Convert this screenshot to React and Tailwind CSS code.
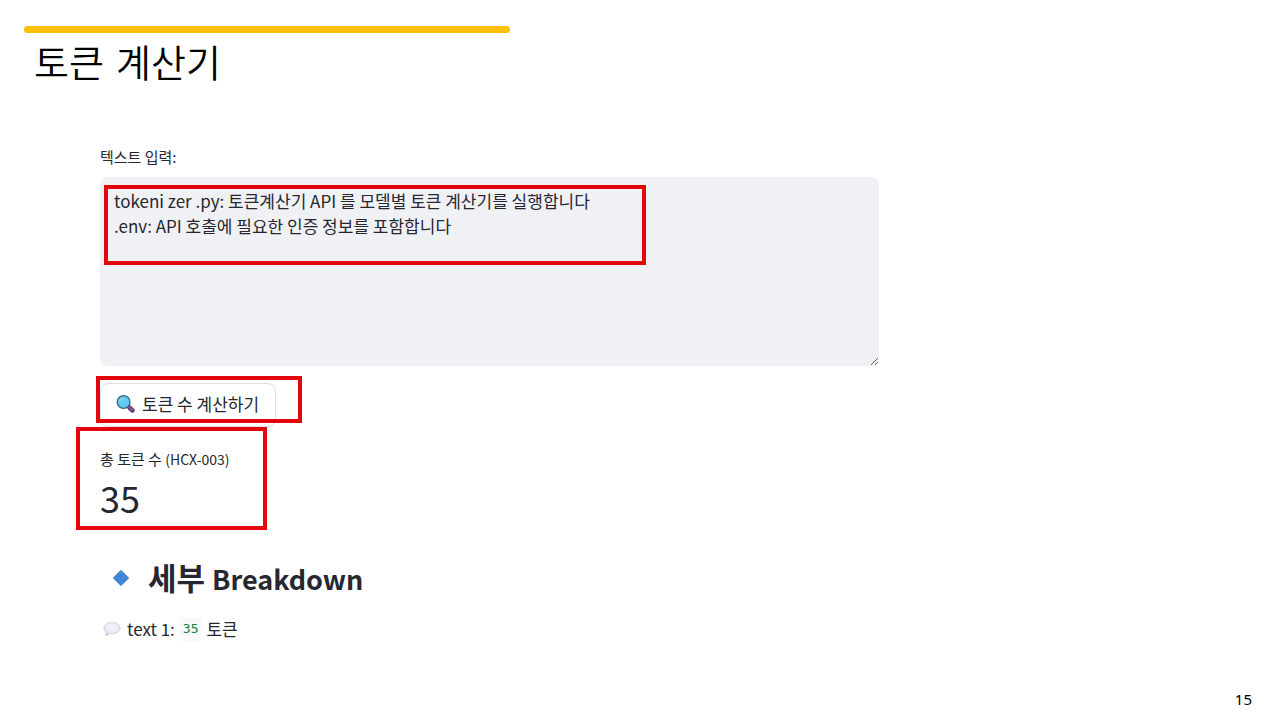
import React, { useState } from 'react';

const SAMPLE_TEXT =
  'tokeni zer .py: 토큰계산기 API 를 모델별 토큰 계산기를 실행합니다\n.env: API 호출에 필요한 인증 정보를 포함합니다';

function Highlight({ className }) {
  return (
    <span
      aria-hidden="true"
      className={`pointer-events-none absolute border-4 border-[#e3060d] ${className}`}
    />
  );
}

function MagnifierIcon() {
  return (
    <svg viewBox="0 0 20 20" className="h-5 w-5 shrink-0" aria-hidden="true">
      <path d="M11.6 13l2.200 2.200" stroke="#5b4a63" strokeWidth="2" />
      <path d="M13.600 14.800l2.800 2.600" stroke="#4e3566" strokeWidth="4.600" strokeLinecap="round" />
      <path d="M13.800 14.800l2.400 2.200" stroke="#865090" strokeWidth="2.800" strokeLinecap="round" />
      <circle cx="7.600" cy="9" r="6.400" fill="#62c8ec" stroke="#3d6585" strokeWidth="1.300" />
      <path d="M3.800 8.200a4.200 4.200 0 0 1 3.400-3.200" stroke="#8fdcf5" strokeWidth="1.200" fill="none" strokeLinecap="round" />
    </svg>
  );
}

function DiamondIcon() {
  return (
    <svg viewBox="0 0 18 18" className="h-[18px] w-[18px] shrink-0" aria-hidden="true">
      <path d="M9 1.4L16.6 9 9 16.6 1.4 9z" fill="#3f87dc" stroke="#3577c4" strokeWidth="1" strokeLinejoin="round" />
    </svg>
  );
}

function BubbleIcon() {
  return (
    <svg viewBox="0 0 18 16" className="h-4 w-[18px] shrink-0" aria-hidden="true">
      <defs>
        <radialGradient id="bubble" cx="0.5" cy="0.4" r="0.7">
          <stop offset="0" stopColor="#f7f4fb" />
          <stop offset="0.6" stopColor="#ece6f4" />
          <stop offset="1" stopColor="#b5a5cd" />
        </radialGradient>
      </defs>
      <path
        d="M9 1.2c4.600 0 8.200 2.500 8.200 5.900S13.600 13 9 13c-1 0-2-.1-2.900-.3-1 1-2.400 1.700-4 1.800.9-.8 1.300-1.800 1.300-2.800C1.800 10.600.8 9 .8 7.100.8 3.700 4.400 1.200 9 1.200z"
        fill="url(#bubble)"
        stroke="#c8bcda"
        strokeWidth="0.5"
      />
    </svg>
  );
}

export default function App() {
  const [text, setText] = useState(SAMPLE_TEXT);

  return (
    <div className="flex min-h-screen flex-col bg-white font-['Noto_Sans_CJK_KR',sans-serif] text-[#262730]">
      <header className="px-6 pt-[26px]">
        <div className="h-[7px] w-[486px] max-w-full rounded-sm bg-[#fdbf07]" />
        <h1 className="px-[10px] pt-[9px] font-['DejaVu_Sans','Noto_Sans_CJK_KR',sans-serif] text-[38px] leading-[44px] font-[350] text-black">
          토큰 계산기
        </h1>
      </header>

      <main className="w-full max-w-[879px] flex-1 pt-[59px] pl-[100px]">
        <label htmlFor="token-text" className="block text-[15px] leading-6">
          텍스트 입력:
        </label>
        <div className="relative mt-2">
          <textarea
            id="token-text"
            value={text}
            onChange={(e) => setText(e.target.value)}
            className="block h-[189px] w-full resize-y rounded-lg bg-[#f0f1f5] px-[14px] py-[11px] text-[17px] leading-[25px] outline-none"
          />
          <Highlight className="top-2 left-1 h-20 w-[542px]" />
        </div>

        <div className="relative mt-[17px] w-fit">
          <button
            type="button"
            className="flex h-11 items-center gap-1.5 rounded-lg border border-[#dfe0e4] bg-white pr-4 pb-1 pl-[15px] text-[17px] leading-[25px]"
          >
            <MagnifierIcon />
            토큰 수 계산하기
          </button>
          <Highlight className="-top-[7px] -left-1 h-[47px] w-[206px]" />
        </div>

        <section className="relative pt-5">
          <p className="text-[15px] leading-6">
            총 토큰 수 <span className="text-sm leading-6">(HCX-003)</span>
          </p>
          <p className="text-4xl leading-[52px]">35</p>
          <Highlight className="top-0 -left-6 h-[103px] w-[191px]" />
        </section>

        <section className="pt-[34px]">
          <h2 className="flex items-center gap-[18px] pl-3 text-[31px] leading-10 font-bold">
            <DiamondIcon />
            <span>
              세부 <span className="text-[27px] leading-10">Breakdown</span>
            </span>
          </h2>
          <p className="flex items-center pt-[18px] pl-[3px] text-[17px] leading-6">
            <BubbleIcon />
            <span className="pl-1.5">text 1:</span>
            <code className="mx-1 rounded bg-[#f8f9fb] px-1 font-['DejaVu_Sans_Mono',monospace] text-[13px] text-[#15803d]">
              35
            </code>
            <span>토큰</span>
          </p>
        </section>
      </main>

      <footer className="px-7 pb-[9px] text-right font-['Noto_Sans',sans-serif] text-[15px] leading-6 text-black">
        15
      </footer>
    </div>
  );
}
